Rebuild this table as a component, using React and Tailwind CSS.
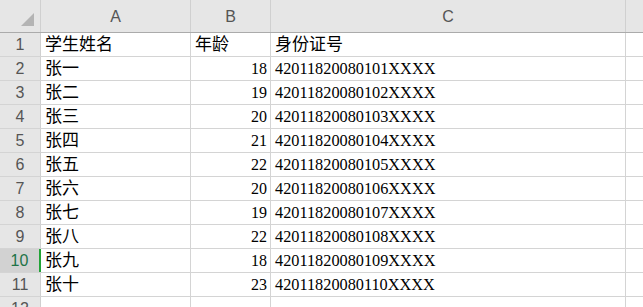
const cols = ['A', 'B', 'C'];

const rows = [
  ['学生姓名', '年龄', '身份证号'],
  ['张一', '18', '42011820080101XXXX'],
  ['张二', '19', '42011820080102XXXX'],
  ['张三', '20', '42011820080103XXXX'],
  ['张四', '21', '42011820080104XXXX'],
  ['张五', '22', '42011820080105XXXX'],
  ['张六', '20', '42011820080106XXXX'],
  ['张七', '19', '42011820080107XXXX'],
  ['张八', '22', '42011820080108XXXX'],
  ['张九', '18', '42011820080109XXXX'],
  ['张十', '23', '42011820080110XXXX'],
  ['', '', ''],
];

const cjk = { fontFamily: '"Liberation Serif", "Noto Sans CJK SC", serif' };

const App = () => {
  return (
    <div className="w-[643px] h-[307px] overflow-hidden bg-white" style={cjk}>
      {/* Column headers */}
      <div className="flex h-[33px] border-b border-[#ababab] bg-[#e6e6e6]">
        <div className="w-[41px] shrink-0 border-r border-[#d0d0d0] relative">
          <svg className="absolute left-[21px] top-[13px]" width="13" height="13" viewBox="0 0 13 13">
            <polygon points="13,0 13,13 0,13" fill="#b4b4b4" />
          </svg>
        </div>
        {[150, 80, 355].map((w, i) => (
          <div
            key={i}
            style={{ width: w }}
            className="shrink-0 border-r border-[#d0d0d0] flex items-center justify-center pt-[2px] text-[16px] text-[#555] font-['Liberation_Sans',sans-serif]"
          >
            {cols[i]}
          </div>
        ))}
        <div className="flex-1" />
      </div>

      {/* Rows */}
      {rows.map((r, i) => {
        const sel = i === 9;
        return (
          <div key={i} className="flex h-[24px] border-b border-[#d4d4d4]">
            <div
              className={
                'w-[41px] shrink-0 flex items-center justify-center pt-[1px] text-[16px] font-["Liberation_Sans",sans-serif] ' +
                (sel
                  ? 'bg-[#d2d2d2] text-[#217346] border-r-2 border-[#21a336]'
                  : 'bg-[#e6e6e6] text-[#555] border-r border-[#d0d0d0]')
              }
            >
              {i + 1}
            </div>
            <div className="w-[150px] shrink-0 border-r border-[#d4d4d4] flex items-center pl-[4px] pt-[1px] text-[17px] text-black">
              {r[0]}
            </div>
            <div
              className={
                'w-[80px] shrink-0 border-r border-[#d4d4d4] flex items-center pr-[3px] pt-[1px] text-black ' +
                (i === 0 ? 'justify-start pl-[4px] text-[17px]' : 'justify-end text-[16px]')
              }
            >
              {r[1]}
            </div>
            <div
              className={
                'w-[355px] shrink-0 border-r border-[#d4d4d4] flex items-center pl-[4px] pt-[1px] text-black ' +
                (i === 0 ? 'text-[17px]' : 'text-[16.3px]')
              }
            >
              {r[2]}
            </div>
            <div className="flex-1" />
          </div>
        );
      })}
    </div>
  );
};

export default App;
